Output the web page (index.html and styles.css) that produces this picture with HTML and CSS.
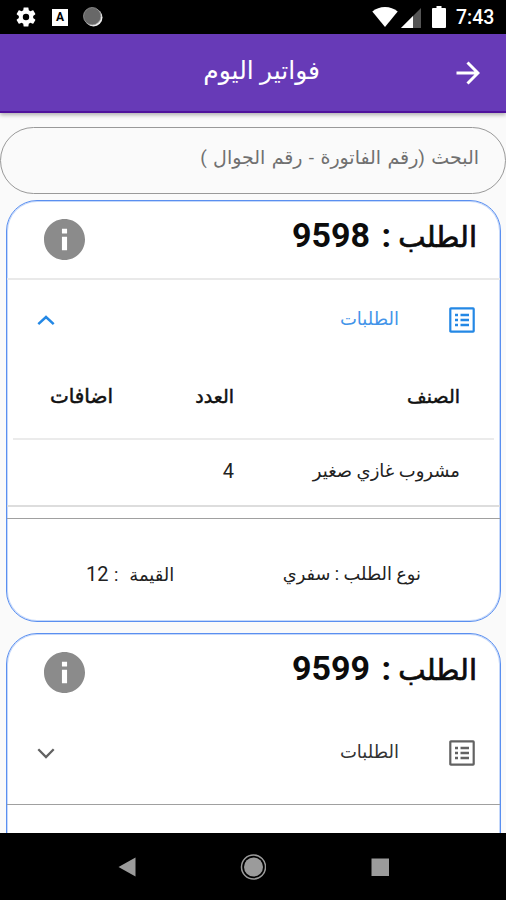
FILE: index.html
```
<!DOCTYPE html>
<html lang="ar" dir="rtl">
<head>
<meta charset="utf-8">
<title>فواتير اليوم</title>
<link rel="stylesheet" href="styles.css">
</head>
<body>
<svg width="0" height="0" class="defs">
  <symbol id="list" viewBox="0 0 26 26"><rect x="1.3" y="1.3" width="23.4" height="23.4" rx=".6" fill="none" stroke="currentColor" stroke-width="2.2"/><path d="M6 8h3M6 13h3M6 18h3M11.500 8h8.500M11.500 13h8.500M11.500 18h8.500" fill="none" stroke="currentColor" stroke-width="2.4"/></symbol>
  <symbol id="info" viewBox="2 2 20 20"><path fill="currentColor" d="M12 2C6.480 2 2 6.480 2 12s4.480 10 10 10 10-4.480 10-10S17.520 2 12 2zm1.250 15.200h-2.500v-6.500h2.500v6.500zm0-8.100h-2.500V6.700h2.500v2.400z"/></symbol>
</svg>
<div class="screen">
  <div class="status" dir="ltr">
    <svg class="gear" viewBox="2 2 20 20"><path fill="#fff" d="M19.140 12.940c.04-.3.060-.61.060-.94 0-.32-.02-.64-.07-.94l2.030-1.580c.18-.14.230-.41.120-.61l-1.920-3.320c-.12-.22-.37-.29-.59-.22l-2.390.96c-.5-.38-1.030-.7-1.620-.94l-.36-2.540c-.04-.24-.24-.41-.48-.41h-3.840c-.24 0-.43.170-.47.410l-.36 2.540c-.59.240-1.130.570-1.620.940l-2.390-.96c-.22-.08-.47 0-.59.220L2.740 8.870c-.12.210-.08.470.120.610l2.030 1.580c-.05.300-.09.630-.09.940s.02.640.070.940l-2.030 1.580c-.18.140-.23.410-.12.610l1.920 3.320c.12.220.370.290.590.220l2.390-.96c.5.380 1.030.700 1.620.940l.36 2.540c.05.240.240.410.480.410h3.840c.24 0 .44-.17.470-.41l.36-2.540c.59-.24 1.130-.56 1.620-.94l2.390.96c.22.080.470 0 .59-.22l1.920-3.320c.12-.22.070-.47-.12-.61l-2.010-1.580zM12 15.200a3.200 3.200 0 1 1 0-6.400 3.200 3.200 0 0 1 0 6.400z"/></svg>
    <span class="abox">A</span>
    <svg class="moon" viewBox="0 0 20 20"><circle cx="10.500" cy="10.500" r="9" fill="#eee"/><circle cx="9.200" cy="9.200" r="8.700" fill="#686868" stroke="#999" stroke-width=".8"/></svg>
    <svg class="wifi" viewBox="0 0 26 20"><path fill="#fff" d="M13 20 .3 4.500C4 1.500 8 0 13 0s9 1.500 12.700 4.500z"/></svg>
    <svg class="signal" viewBox="0 0 20 20"><path fill="#555" d="M20 0v20H0z"/><path fill="#fff" d="M12 8v12H0z"/></svg>
    <svg class="battery" viewBox="0 0 14 22"><path fill="#fff" d="M4.500 0h5v2H13a1 1 0 0 1 1 1v18a1 1 0 0 1-1 1H1a1 1 0 0 1-1-1V3a1 1 0 0 1 1-1h3.500z"/></svg>
    <span class="time">7:43</span>
  </div>
  <header class="appbar">
    <svg class="back" viewBox="0 0 24 24"><path d="M.5 12h20.500M11.500 1.500 22 12 11.500 22.500" fill="none" stroke="#fff" stroke-width="3"/></svg>
    <h1>فواتير اليوم</h1>
  </header>
  <main>
    <div class="search"><span>البحث (رقم الفاتورة - رقم الجوال )</span></div>
    <section class="card">
      <div class="head lined"><h2>الطلب <b>: 9598</b></h2><svg class="info"><use href="#info"/></svg></div>
      <div class="tile open"><svg class="list"><use href="#list"/></svg><span class="label">الطلبات</span><svg class="chev" viewBox="0 0 18 11"><path d="m1.300 9.200 7.700-7.200 7.700 7.200" fill="none" stroke="currentColor" stroke-width="2.500"/></svg></div>
      <div class="table">
        <div class="row th"><span>الصنف</span><span>العدد</span><span class="extra">اضافات</span></div>
        <div class="row"><span>مشروب غازي صغير</span><span class="num">4</span><span></span></div>
      </div>
      <div class="foot"><span class="kind">نوع الطلب : سفري</span><span class="value">القيمة &nbsp;: <b>12</b></span></div>
    </section>
    <section class="card second">
      <div class="head"><h2>الطلب <b>: 9599</b></h2><svg class="info"><use href="#info"/></svg></div>
      <div class="tile"><svg class="list"><use href="#list"/></svg><span class="label">الطلبات</span><svg class="chev" viewBox="0 0 18 11"><path d="m1.300 1.300 7.700 7.700 7.700-7.700" fill="none" stroke="currentColor" stroke-width="2.300"/></svg></div>
      <div class="foot"></div>
    </section>
  </main>
  <nav class="nav" dir="ltr">
    <svg viewBox="0 0 26 26"><path d="M5.500 13 22.500 3.500v19z" fill="#9b9b9b"/></svg>
    <svg viewBox="0 0 26 26"><circle cx="13.500" cy="13" r="12" fill="none" stroke="#9b9b9b" stroke-width="1.500"/><circle cx="13.500" cy="13" r="9.500" fill="#9b9b9b"/></svg>
    <svg viewBox="0 0 26 26"><path d="M4.500 4.500h17.500V22H4.500z" fill="#9b9b9b"/></svg>
  </nav>
</div>
</body>
</html>
```
FILE: styles.css
```
* { box-sizing: border-box; }
body { margin: 0; font-family: Roboto, "DejaVu Sans", sans-serif; color: #222; }
.defs { position: absolute; }
svg { display: block; flex: none; }
.screen { width: 506px; height: 900px; display: flex; flex-direction: column; overflow: hidden; background: #fafafa; }
.status { height: 34px; flex: none; background: #000; display: flex; align-items: center; padding: 0 11px 0 16px; }
.gear { width: 20px; height: 20px; }
.abox { width: 16px; height: 17px; margin-left: 16px; background: #fff; color: #000; font: 700 12px/17px Roboto, sans-serif; text-align: center; }
.moon { width: 20px; height: 20px; margin-left: 15px; }
.wifi { width: 26px; height: 20px; margin-left: auto; }
.signal { width: 20px; height: 20px; margin: 2px 0 0 3px; }
.battery { width: 14px; height: 22px; margin-left: 11px; }
.time { width: 39px; margin-left: 10px; color: #fff; font-size: 19.5px; font-weight: 500; line-height: 36px; padding-top: 2px; white-space: nowrap; }
.appbar { height: 79px; flex: none; display: flex; align-items: center; padding: 0 26px 0 0; background: #673ab7; border-bottom: 2px solid #4f129c; box-shadow: 0 2px 4px rgba(0,0,0,.3); z-index: 1; }
.back { width: 24px; height: 24px; }
h1 { margin: 0 136px 4px 0; color: #fff; font-size: 25px; font-weight: 400; line-height: 36px; white-space: nowrap; }
main { flex: 1; min-height: 0; overflow: hidden; padding-top: 14px; }
.search { height: 67px; border: 1px solid #999; border-radius: 34px; padding: 0 26px; display: flex; align-items: center; color: #707070; font-size: 19px; word-spacing: 1.6px; white-space: nowrap; }
.search span { margin-bottom: 6px; }
.card { margin: 6px 5px 0 6px; height: 422px; border: 1px solid #5a8ff0; box-shadow: inset 0 0 0 1px rgba(90,143,240,.35); border-radius: 31px; background: #fff; overflow: hidden; }
.card.second { margin-top: 11px; }
.head { height: 79px; display: flex; justify-content: space-between; padding: 0 23px 0 37px; }
.head.lined { border-bottom: 2px solid #e9e9e9; }
h2 { margin: 11px 0 0; font-size: 29px; font-weight: 400; line-height: 46px; color: #0c0c0c; white-space: nowrap; -webkit-text-stroke: .7px #0c0c0c; }
h2 b { font-size: 34px; font-weight: 700; word-spacing: 3px; -webkit-text-stroke: 0; }
.info { width: 41px; height: 41px; margin-top: 18px; color: #8b8b8b; }
.tile { height: 80px; display: flex; align-items: center; padding: 0 25px 0 30px; color: #626262; }
.tile.open { color: #2488e5; }
.list { width: 26px; height: 26px; }
.label { margin: 0 50px 4px 0; font-size: 18px; color: #333; white-space: nowrap; }
.open .label { color: #4394e9; }
.chev { width: 18px; height: 11px; margin-right: auto; }
.table { border-bottom: 2px solid #ddd; height: 147px; }
.row { margin: 0 6px; height: 66px; display: grid; grid-template-columns: 226px 121px 1fr; align-items: center; padding-right: 34px; font-size: 18px; white-space: nowrap; }
.row span { margin-bottom: 6px; }
.row .num { font-size: 20px; margin-bottom: 4px; }
.th { height: 80px; font-size: 19px; color: #111; -webkit-text-stroke: .5px #111; border-bottom: 2px solid #ebebeb; }
.row .extra { font-size: 20px; }
.foot { margin-top: 11px; height: 103px; border-top: 1px solid #a0a0a0; display: flex; align-items: center; padding: 7px 79px 0 79px; justify-content: space-between; font-size: 18px; white-space: nowrap; }
.foot b { font-size: 20px; font-weight: 400; }
.foot .kind { font-size: 17.8px; }
.foot .value { word-spacing: 1px; }
.nav { height: 67px; flex: none; background: #000; display: flex; justify-content: center; align-items: center; gap: 101px; z-index: 1; }
.nav svg { width: 26px; height: 26px; }
```
